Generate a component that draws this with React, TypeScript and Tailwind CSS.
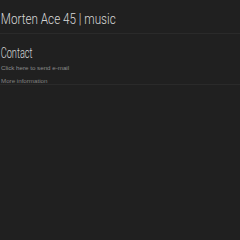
import React from 'react';

const App: React.FC = () => {
  return (
    <div className="min-h-screen w-full bg-[#202020] text-[#d8d8d8]">
      <header className="border-b border-[#2a2a2a] h-[34px] pt-[6px]">
        <h1 className="inline-block origin-left scale-x-[0.78] pl-[1px] text-[15px] font-light leading-[20px] font-['Roboto',sans-serif]">
          Morten Ace 45 | music
        </h1>
      </header>
      <section className="border-b border-[#2a2a2a] h-[51px] pt-[6px]">
        <h2 className="inline-block origin-left scale-x-[0.66] pl-[1px] text-[14px] font-light leading-[18px] font-['Roboto',sans-serif]">
          Contact
        </h2>
        <a
          href="#"
          className="block pl-[1px] text-[6.2px] leading-[8px] text-[#8c8c8c] font-['Liberation_Sans',sans-serif]"
        >
          Click here to send e-mail
        </a>
        <p className="pl-[1px] mt-[5px] text-[6.2px] leading-[8px] text-[#808080] font-['Liberation_Sans',sans-serif]">
          More information
        </p>
      </section>
    </div>
  );
};

export default App;
